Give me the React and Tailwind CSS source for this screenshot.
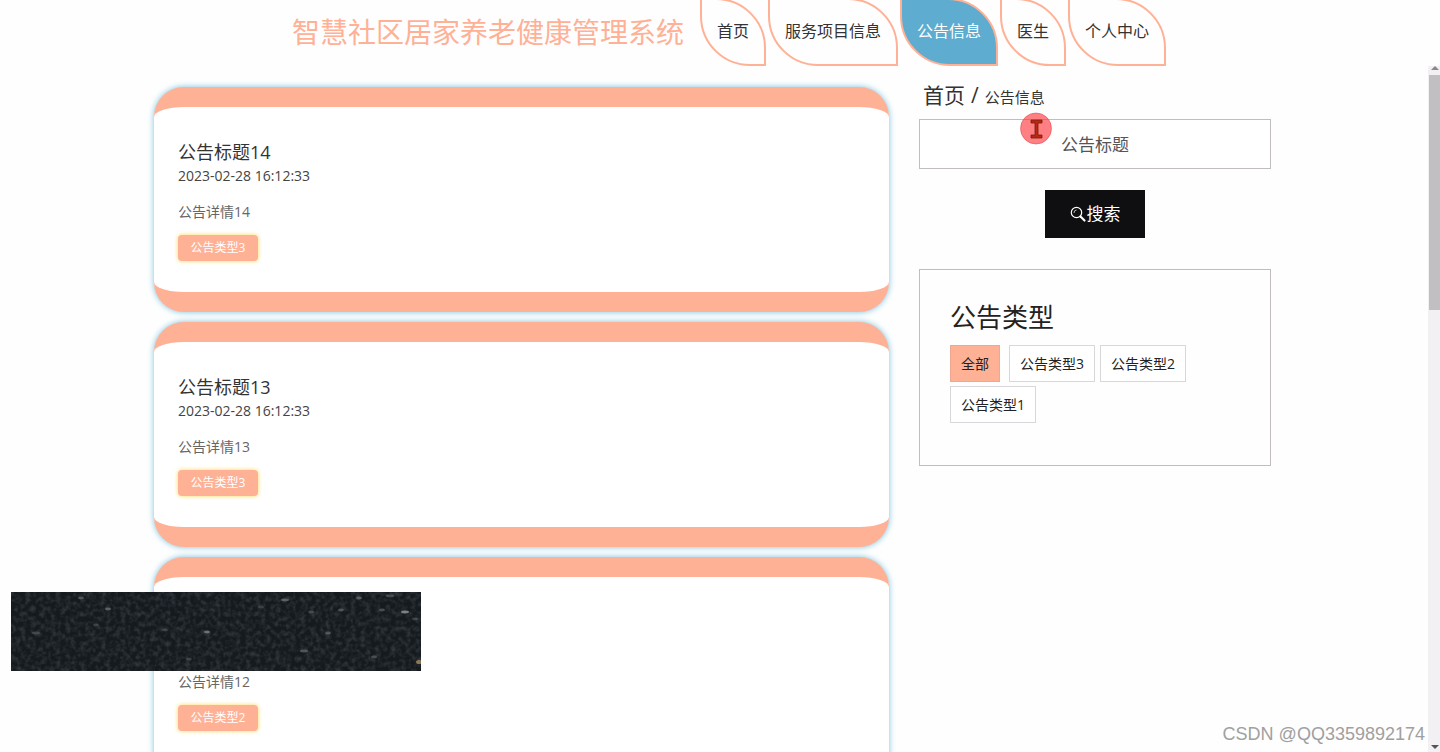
import React, { useState } from 'react';

const navItems = ['首页', '服务项目信息', '公告信息', '医生', '个人中心'];

const notices = [
  { id: 14, time: '2023-02-28 16:12:33', type: '公告类型3' },
  { id: 13, time: '2023-02-28 16:12:33', type: '公告类型3' },
  { id: 12, time: '2023-02-28 16:12:33', type: '公告类型2' },
];

const types = ['全部', '公告类型3', '公告类型2', '公告类型1'];

// [x, y, rx, opacity]
const specks = [
  [70, 6, 3, 0.35], [97, 17, 3, 0.4], [25, 41, 4, 0.2], [154, 38, 3, 0.2], [196, 40, 3, 0.5],
  [274, 8, 4, 0.4], [300, 20, 3, 0.25], [330, 18, 3, 0.3], [348, 6, 3, 0.35], [379, 4, 4, 0.25],
  [371, 18, 3, 0.3], [394, 20, 4, 0.6], [317, 41, 3, 0.3], [293, 59, 4, 0.35], [363, 65, 3, 0.3],
  [178, 67, 3, 0.2], [250, 15, 3, 0.2], [85, 33, 3, 0.2], [404, 27, 3, 0.25],
];

function Header({ active }) {
  return (
    <header className="flex h-[66px] shrink-0 items-end justify-center overflow-hidden pl-[2px]">
      <h1 className="px-4 text-[28px] leading-[68px] whitespace-nowrap text-[#ffb196]">智慧社区居家养老健康管理系统</h1>
      <nav className="flex gap-[2px]">
        {navItems.map((item) => (
          <a
            key={item}
            href="#"
            className={`h-[68px] rounded-tr-[50px] rounded-bl-[50px] border-2 border-[#ffb196] px-[15px] text-base leading-[62px] whitespace-nowrap ${
              item === active ? 'bg-[#5eacd0] text-white' : 'text-[#333]'
            }`}
          >
            {item}
          </a>
        ))}
      </nav>
    </header>
  );
}

function NoticeCard({ notice }) {
  return (
    <article className="rounded-[30px] border-y-20 border-[#ffb196] bg-white px-6 py-[31px] shadow-[0_0_6px_#7cc0dc]">
      <h2 className="text-lg leading-7 text-[#333]">公告标题{notice.id}</h2>
      <p className="text-sm leading-5 text-[#444]">{notice.time}</p>
      <p className="mt-4 text-sm leading-5 text-[#666]">公告详情{notice.id}</p>
      <span className="mt-[13px] block h-[26px] w-20 rounded bg-[#ffb196] text-center text-xs leading-[26px] text-white shadow-[0_0_4px_#ffd850]">
        {notice.type}
      </span>
    </article>
  );
}

function SearchIcon() {
  return (
    <svg width="17" height="17" viewBox="0 0 17 17" fill="none" stroke="#fff" aria-hidden="true">
      <circle cx="6.5" cy="6.5" r="5.2" strokeWidth="1.2" />
      <path d="M4 7A2.8 2.8 0 0 1 6.5 4" strokeWidth="0.7" />
      <path d="M10.5 10.5l4 4" strokeWidth="2.2" strokeLinecap="round" />
    </svg>
  );
}

function Sidebar() {
  const [selected, setSelected] = useState('全部');

  return (
    <aside className="pt-[14px]">
      <div className="flex items-baseline px-1 leading-[31px] text-[#333]">
        <a href="#" className="text-[21px]">首页</a>
        <span className="px-[6px] text-[21px]">/</span>
        <span className="text-[15px]">公告信息</span>
      </div>

      <form className="mt-[6px] flex flex-col items-center" onSubmit={(e) => e.preventDefault()}>
        <input
          type="text"
          aria-label="公告标题"
          placeholder="公告标题"
          className="h-[50px] w-full border border-[#c0bcc0] bg-white text-center text-[17px] text-[#333] outline-none placeholder:text-[#555]"
        />
        <button type="submit" className="mt-[21px] flex h-12 w-[100px] items-center justify-center bg-[#0f0f11] text-[17px] text-white">
          <SearchIcon />
          搜索
        </button>
      </form>

      <section className="mt-[31px] h-[197px] border border-[#c0bcc0] px-[30px] pt-[27px]">
        <h2 className="text-[26px] leading-10 text-[#222]">公告类型</h2>
        <div className="mt-2 flex flex-wrap gap-x-[5px] gap-y-1">
          {types.map((type) => (
            <button
              key={type}
              type="button"
              onClick={() => setSelected(type)}
              className={`h-[37px] border px-[10px] text-sm text-[#222] first:mr-1 ${
                type === selected ? 'border-[#eea88f] bg-[#ffb196]' : 'border-[#d8d8dc] bg-white'
              }`}
            >
              {type}
            </button>
          ))}
        </div>
      </section>
    </aside>
  );
}

function ScrollBar() {
  return (
    <div className="flex w-[15px] shrink-0 flex-col items-end">
      <div className="flex w-3 flex-1 flex-col items-end bg-[#f3f0f3]">
        <svg className="mr-px" width="8" height="9" viewBox="0 0 8 9" aria-hidden="true">
          <path d="M0 4L4 0L8 4Z" fill="#888" />
        </svg>
        <div className="h-[235px] w-[11px] bg-[#c1bfc1]" />
        <svg className="mt-auto mr-px" width="8" height="8" viewBox="0 0 8 8" aria-hidden="true">
          <path d="M0 1H8L4 5Z" fill="#555" />
        </svg>
      </div>
    </div>
  );
}

function DarkStrip() {
  return (
    <svg className="absolute bottom-[81px] left-[11px]" width="410" height="79" viewBox="0 0 410 79" aria-hidden="true">
      <filter id="grain" x="0" y="0" width="100%" height="100%">
        <feTurbulence type="fractalNoise" baseFrequency="0.2" numOctaves="2" seed="4" />
        <feColorMatrix values="0 0 0 0 0.2  0 0 0 0 0.24  0 0 0 0 0.26  0.6 0 0 0 -0.24" />
      </filter>
      <rect width="410" height="79" fill="#151a1f" />
      <rect width="410" height="79" filter="url(#grain)" />
      {specks.map(([x, y, rx, opacity]) => (
        <ellipse key={`${x}-${y}`} cx={x} cy={y} rx={rx} ry="1.4" fill="#b8c2c4" opacity={opacity} />
      ))}
      <ellipse cx="408" cy="70" rx="3" ry="2" fill="#b99a62" opacity="0.7" />
    </svg>
  );
}

function Pointer() {
  return (
    <svg className="pointer-events-none absolute top-28 left-[1020px]" width="32" height="33" viewBox="0 0 32 33" aria-hidden="true">
      <circle cx="16" cy="16.5" r="15.5" fill="#ff3b41" fillOpacity="0.65" stroke="#e05058" strokeOpacity="0.6" />
      <path d="M11 8h11v3h-4v12h4v3H11v-3h4V11h-4z" fill="#b82a10" stroke="#7c1a10" strokeWidth="0.8" />
    </svg>
  );
}

export default function App() {
  return (
    <div className="relative flex h-screen flex-col overflow-hidden bg-[#fefefe] font-['Open_Sans','Noto_Sans_CJK_SC',sans-serif]">
      <Header active="公告信息" />
      <div className="flex min-h-0 flex-1">
        <main className="flex-1 overflow-hidden">
          <div className="mx-auto grid max-w-[1117px] grid-cols-[1fr_352px] gap-[30px]">
            <div className="flex flex-col gap-[10px] pt-[21px]">
              {notices.map((notice) => (
                <NoticeCard key={notice.id} notice={notice} />
              ))}
            </div>
            <Sidebar />
          </div>
        </main>
        <ScrollBar />
      </div>

      <DarkStrip />
      <Pointer />
      <p className="absolute right-[15px] bottom-[6px] font-['Liberation_Sans',sans-serif] text-lg leading-6 text-[#a0a0a0]">
        CSDN @QQ3359892174
      </p>
    </div>
  );
}
